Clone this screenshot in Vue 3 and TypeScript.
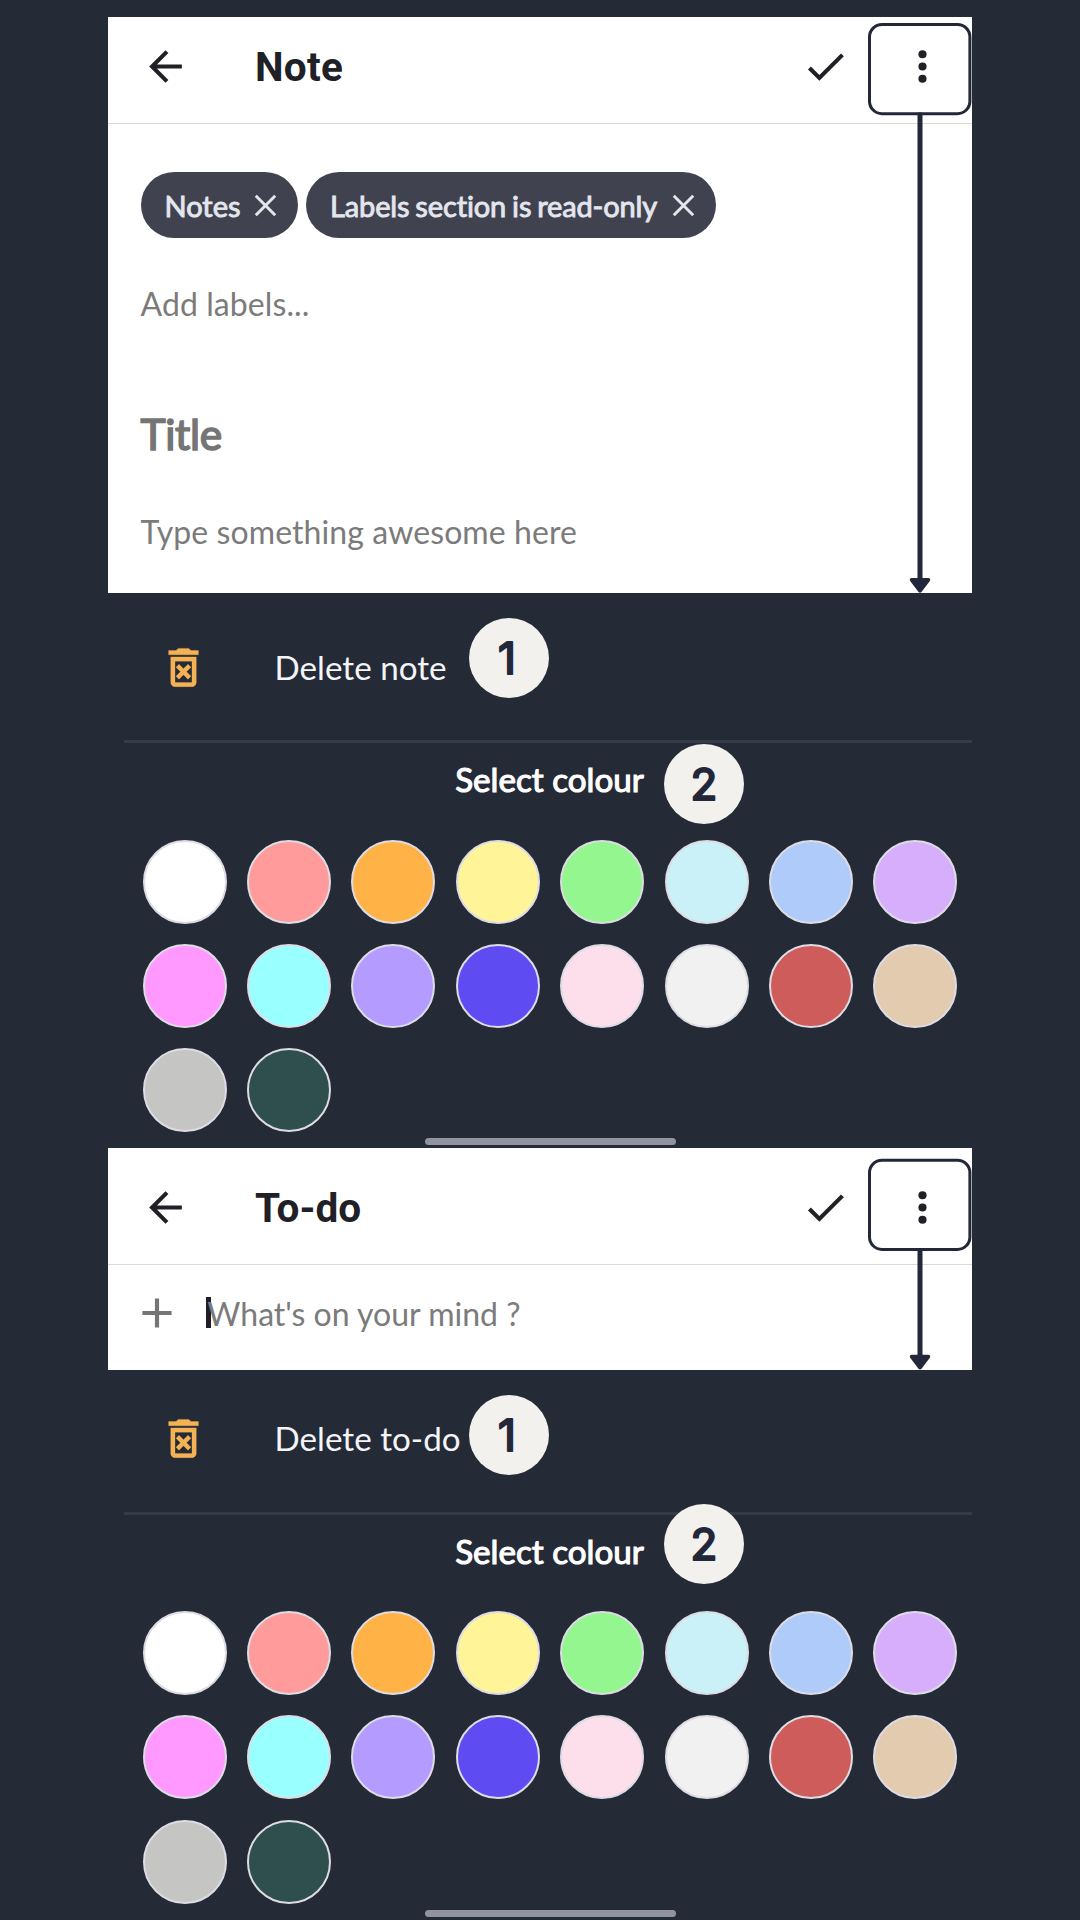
<script setup lang="ts">
interface Sheet {
  kind: 'note' | 'todo'
  heading: string
  action: string
  panelHeight: number
  frameTop: number
}

const sheets: Sheet[] = [
  { kind: 'note', heading: 'Note', action: 'Delete note', panelHeight: 576, frameTop: 7.5 },
  { kind: 'todo', heading: 'To-do', action: 'Delete to-do', panelHeight: 221.7, frameTop: 12.2 },
]

const labels = [
  { text: 'Notes', size: 'short' },
  { text: 'Labels section is read-only', size: 'long' },
]

const colours: string[] = [
  '#ffffff', '#ff9c9b', '#ffb347', '#fff497', '#93f68f', '#caf0f8', '#aecbfa', '#d7aefb',
  '#ff99ff', '#99ffff', '#b39bff', '#5f4bf2', '#fddeeb', '#f1f1f1', '#cd5c5b', '#e3cbb0',
  '#c5c5c4', '#2f4f4e',
]
</script>

<template>
  <main class="page">
    <section v-for="s in sheets" :key="s.kind" class="screen" :class="s.kind">
      <div class="panel">
        <header class="bar">
          <svg class="icon" viewBox="0 0 24 24"><path d="M20 11H7.83l5.59-5.59L12 4l-8 8 8 8 1.41-1.41L7.83 13H20z" /></svg>
          <h1>{{ s.heading }}</h1>
          <svg class="icon check" viewBox="0 0 24 24"><path d="M9 16.17L4.83 12l-1.42 1.41L9 19 21 7l-1.41-1.41z" /></svg>
          <svg class="icon" viewBox="0 0 24 24">
            <circle cx="12" cy="6" r="2" /><circle cx="12" cy="12" r="2" /><circle cx="12" cy="18" r="2" />
          </svg>
        </header>

        <div v-if="s.kind === 'note'" class="editor">
          <div class="chips">
            <div v-for="l in labels" :key="l.text" class="chip" :class="l.size">
              <span>{{ l.text }}</span>
              <svg viewBox="0 0 24 24"><path d="M5.7 5.7 18.3 18.3M18.3 5.7 5.7 18.3" /></svg>
            </div>
          </div>
          <p class="hint add"><span>Add labels...</span></p>
          <p class="title"><span>Title</span></p>
          <p class="hint body"><span>Type something awesome here</span></p>
        </div>
        <div v-else class="entry">
          <svg class="plus" viewBox="0 0 24 24"><path d="M19 13h-6v6h-2v-6H5v-2h6V5h2v6h6z" /></svg>
          <i class="caret"></i>
          <p class="hint mind"><span>What's on your mind ?</span></p>
        </div>

        <svg class="callout" width="864" :height="s.panelHeight">
          <rect x="761.5" :y="s.frameTop" width="100.4" height="89.2" rx="12.5" />
          <line x1="812" :y1="s.frameTop + 88" x2="812" :y2="s.panelHeight - 10" />
          <path
            :transform="`translate(812 ${s.panelHeight})`"
            d="M-8.5 -15H8.5Q11 -14.5 9.8 -12L1.5 -1Q0 .6 -1.5 -1L-9.8 -12Q-11 -14.5 -8.5 -15Z"
          />
        </svg>
      </div>

      <div class="sheet">
        <div class="action">
          <svg class="trash" viewBox="0 0 24 24">
            <path d="M14.12 10.47L12 12.59l-2.13-2.12-1.41 1.41L10.59 14l-2.12 2.12 1.41 1.41L12 15.41l2.12 2.12 1.41-1.41L13.41 14l2.12-2.12zM15.5 4l-1-1h-5l-1 1H5v2h14V4zM6 19c0 1.1.9 2 2 2h8c1.1 0 2-.9 2-2V7H6v12zM8 9h8v10H8V9z" />
          </svg>
          <span>{{ s.action }}</span>
        </div>
        <hr />
        <h2><span>Select colour</span></h2>
        <div class="swatches">
          <i v-for="c in colours" :key="c" :style="{ background: c }"></i>
        </div>
        <div class="home"></div>
        <svg class="badge one" viewBox="0 0 80 80">
          <circle cx="40" cy="40" r="40" />
          <text x="38" y="56">1</text>
        </svg>
        <svg class="badge two" viewBox="0 0 80 80">
          <circle cx="40" cy="40" r="40" />
          <text x="40" y="56">2</text>
        </svg>
      </div>
    </section>
  </main>
</template>

<style>
body {
  background: #252a37;
}
</style>

<style scoped>
.page {
  box-sizing: border-box;
  width: 1080px;
  height: 1920px;
  padding: 17px 108px 0;
  overflow: hidden;
  background: #252a37;
  font-family: Lato, 'Liberation Sans', sans-serif;
}

h1,
h2,
p {
  margin: 0;
  font-weight: 400;
  white-space: nowrap;
}

svg {
  display: block;
  flex: none;
}

.panel {
  position: relative;
  height: 576px;
  background: #fff;
}

.todo .panel {
  height: 221.7px;
}

.bar {
  box-sizing: border-box;
  display: flex;
  height: 107px;
  padding: 24.5px 25px 0 32.5px;
  border-bottom: 1px solid #dadada;
}

.todo .bar {
  height: 116.5px;
  padding-top: 34.5px;
}

.icon {
  width: 49px;
  height: 49px;
  fill: #202127;
}

.bar h1 {
  flex: 1;
  margin-left: 65.4px;
  font: 700 40.5px/51px Roboto, 'Liberation Sans', sans-serif;
  letter-spacing: 0.3px;
  color: #202127;
}

.todo .bar h1 {
  letter-spacing: 0;
}

.check {
  margin-right: 48.5px;
}

.editor {
  padding: 48px 32.5px 0;
}

.chips {
  display: flex;
  gap: 8px;
}

.chip {
  box-sizing: border-box;
  display: flex;
  align-items: center;
  height: 66px;
  padding: 0 14px 0 24px;
  border-radius: 33px;
  background: #40434f;
  color: #e4e6ee;
  font-size: 29px;
  line-height: 40px;
  white-space: nowrap;
}

.chip.short {
  width: 157.5px;
}

.chip.long {
  width: 410px;
  letter-spacing: -0.13px;
  word-spacing: -1.4px;
}

.chip span {
  flex: 1;
  padding-top: 1px;
  -webkit-text-stroke: 0.9px currentColor;
}

.chip svg {
  width: 37px;
  height: 37px;
  fill: none;
  stroke: #e4e6ee;
  stroke-width: 1.9;
}

.hint {
  font-size: 32px;
  line-height: 40px;
  letter-spacing: 0.09px;
  color: #7b7b7b;
}

.add {
  margin-top: 46px;
}

.title {
  margin-top: 84.5px;
  font-size: 42.5px;
  line-height: 50px;
  letter-spacing: -0.3px;
  color: #757575;
  -webkit-text-stroke: 1.6px currentColor;
}

.body {
  margin-top: 53.5px;
}

.entry {
  display: flex;
  align-items: center;
  height: 96px;
  padding-left: 24.3px;
}

.plus {
  width: 50px;
  height: 50px;
  fill: #757575;
}

.caret {
  width: 5px;
  height: 31px;
  margin-left: 24px;
  background: #1e1e26;
}

.mind {
  margin: 3px 0 0 -4px;
  letter-spacing: 0;
}

.callout {
  position: absolute;
  top: 0;
  left: 0;
  fill: #23273a;
}

.callout rect {
  fill: none;
  stroke: #23273a;
  stroke-width: 3;
}

.callout line {
  stroke: #23273a;
  stroke-width: 5;
}

.sheet {
  position: relative;
  height: 555.3px;
  padding-top: 48.7px;
  box-sizing: border-box;
}

.todo .sheet {
  padding-top: 43px;
}

.action {
  display: flex;
  align-items: flex-start;
  height: 98.6px;
  padding-left: 49.6px;
  color: #f4f5f8;
  font-size: 33.2px;
  line-height: 51px;
}

.action span {
  margin-left: 66px;
}

.trash {
  width: 51px;
  height: 51px;
  fill: #f5b255;
  stroke: #f5b255;
  stroke-width: 0.15;
}

hr {
  height: 3px;
  margin: 0 0 0 16px;
  border: 0;
  background: #363b49;
}

h2 {
  height: 96.4px;
  padding: 16px 0 0 19px;
  box-sizing: border-box;
  text-align: center;
  font-size: 33.2px;
  line-height: 40px;
  color: #fff;
  -webkit-text-stroke: 1.1px currentColor;
}

.swatches {
  display: grid;
  grid-template-columns: repeat(8, 84px);
  gap: 20.35px;
  padding-left: 34.8px;
}

.swatches i {
  box-sizing: border-box;
  height: 84px;
  border: 2px solid #dddce4;
  border-radius: 50%;
}

.home {
  width: 251px;
  height: 7px;
  margin: 5.8px 0 0 316.5px;
  border-radius: 3.5px;
  background: #91949f;
}

.todo .home {
  margin-top: 6.4px;
}

.badge {
  position: absolute;
  width: 80px;
  height: 80px;
  fill: #f2f1ed;
}

.badge text {
  font: 400 44px Inter, 'Liberation Sans', sans-serif;
  text-anchor: middle;
  fill: #23273a;
  stroke: #23273a;
  stroke-width: 2.1;
  stroke-linejoin: round;
  stroke-linecap: round;
}

.one {
  left: 360.6px;
  top: 24.6px;
}

.two {
  left: 555.6px;
  top: 151px;
}

.todo .one {
  top: 25px;
}

.todo .two {
  top: 134.4px;
}
</style>
